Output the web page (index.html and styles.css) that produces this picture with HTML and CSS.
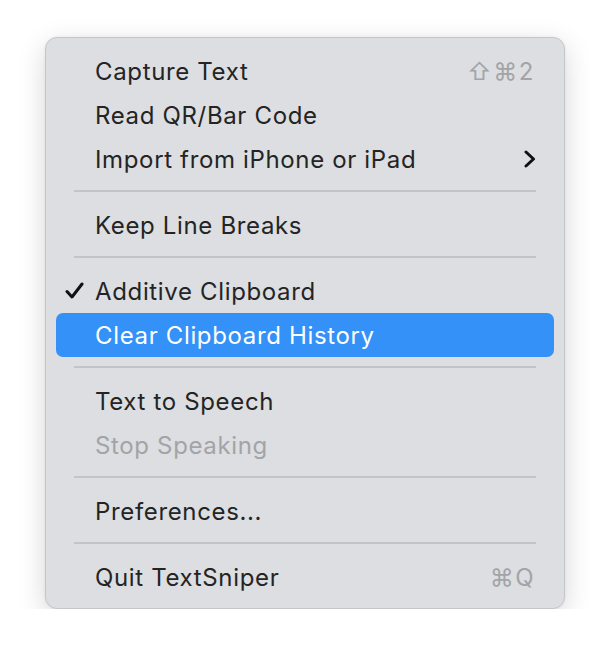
FILE: index.html
```html
<!DOCTYPE html>
<html lang="en">
<head>
    <meta charset="UTF-8">
    <meta name="viewport" content="width=device-width, initial-scale=1.0">
    <title>TextSniper Menu</title>
    <link rel="stylesheet" href="styles.css">
</head>
<body>
    <div class="menu">
        <div class="item">
            <span class="label">Capture Text</span>
            <span class="shortcut">⇧⌘2</span>
        </div>
        <div class="item">
            <span class="label">Read QR/Bar Code</span>
        </div>
        <div class="item">
            <span class="label">Import from iPhone or iPad</span>
            <svg class="chevron" width="12" height="18" viewBox="0 0 12 18">
                <path d="M2 2 L9.5 9 L2 16" fill="none" stroke="#111" stroke-width="3" stroke-linecap="round" stroke-linejoin="round"/>
            </svg>
        </div>
        <div class="separator"></div>
        <div class="item">
            <span class="label">Keep Line Breaks</span>
        </div>
        <div class="separator"></div>
        <div class="item">
            <svg class="check" width="19" height="17" viewBox="0 0 19 17">
                <path d="M2 9.5 L7 15 L17 2" fill="none" stroke="#111" stroke-width="3" stroke-linecap="round" stroke-linejoin="round"/>
            </svg>
            <span class="label">Additive Clipboard</span>
        </div>
        <div class="item selected">
            <span class="label">Clear Clipboard History</span>
        </div>
        <div class="separator"></div>
        <div class="item">
            <span class="label">Text to Speech</span>
        </div>
        <div class="item disabled">
            <span class="label">Stop Speaking</span>
        </div>
        <div class="separator"></div>
        <div class="item">
            <span class="label">Preferences...</span>
        </div>
        <div class="separator"></div>
        <div class="item">
            <span class="label">Quit TextSniper</span>
            <span class="shortcut">⌘Q</span>
        </div>
    </div>
</body>
</html>
```

FILE: styles.css
```css
body {
    margin: 0;
    padding: 0;
    background-color: #ffffff;
    font-family: Inter, "Noto Sans", sans-serif;
}
.menu {
    position: relative;
    width: 518px;
    margin: 37px 0 0 45px;
    padding: 11px 0 9px;
    background-color: #dcdee1;
    border: 1px solid #c4c6c9;
    border-radius: 12px;
    box-shadow: 0 8px 28px rgba(0, 0, 0, 0.16), 0 0 3px rgba(0, 0, 0, 0.06);
}
.item {
    position: relative;
    display: flex;
    align-items: center;
    height: 44px;
    margin: 0 10px;
    padding: 0 19px 0 39px;
    border-radius: 7px;
    font-size: 24px;
    letter-spacing: 0.65px;
    color: #242424;
}
.label {
    flex: 1;
}
.shortcut {
    color: #a2a4a7;
    letter-spacing: 1.5px;
}
.chevron {
    margin-right: -1px;
}
.check {
    position: absolute;
    left: 9px;
    top: 13px;
}
.selected {
    background-color: #3391f7;
    color: #ffffff;
}
.disabled {
    color: #a2a4a7;
}
.separator {
    height: 2px;
    margin: 9px 28px 11px;
    background-color: #c2c4c7;
}
```
